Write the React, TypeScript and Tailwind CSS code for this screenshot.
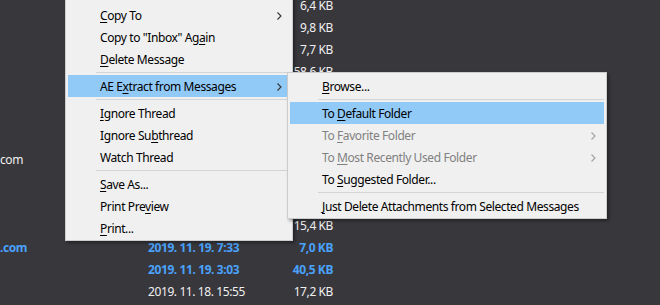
import React from 'react';

type MenuEntry =
  | { kind: 'sep' }
  | { kind: 'item'; text: string; key?: number; arrow?: boolean; disabled?: boolean; active?: boolean };

// label with the access-key letter underlined
const Label: React.FC<{ text: string; at?: number }> = ({ text, at }) => {
  if (at === undefined || at < 0) return <>{text}</>;
  return (
    <>
      {text.slice(0, at)}
      <span className="underline underline-offset-2">{text[at]}</span>
      {text.slice(at + 1)}
    </>
  );
};

const Chevron: React.FC<{ muted?: boolean }> = ({ muted }) => (
  <svg width="5" height="8" viewBox="0 0 5 8" className="shrink-0">
    <path d="M0.5 0.5 L4 4 L0.5 7.5" fill="none" stroke={muted ? '#a0a0a0' : '#333333'} strokeWidth="1.1" />
  </svg>
);

const Menu: React.FC<{ entries: MenuEntry[]; className: string }> = ({ entries, className }) => (
  <div
    className={`absolute border border-[#cccccc] bg-[#f0f0f0] px-[2px] pt-[2px] pb-[1px] shadow-[2px_2px_3px_rgba(0,0,0,0.35)] ${className}`}
  >
    {entries.map((e, i) =>
      e.kind === 'sep' ? (
        <div key={i} className="h-[5px] pt-[2px] pl-[28px]">
          <div className="h-px bg-[#d4d4d4]" />
        </div>
      ) : (
        <div
          key={i}
          className={`flex h-[22px] items-center justify-between pl-[32px] pr-[8px] pt-[2px] whitespace-nowrap ${
            e.active ? 'bg-[#91c9f7]' : ''
          } ${e.disabled ? 'text-[#808080]' : 'text-black'}`}
        >
          <span>
            <Label text={e.text} at={e.key} />
          </span>
          {e.arrow && <Chevron muted={e.disabled} />}
        </div>
      )
    )}
  </div>
);

const mainMenu: MenuEntry[] = [
  { kind: 'item', text: 'Move To', arrow: true },
  { kind: 'item', text: 'Copy To', key: 0, arrow: true },
  { kind: 'item', text: 'Copy to "Inbox" Again', key: 18 },
  { kind: 'item', text: 'Delete Message', key: 0 },
  { kind: 'sep' },
  { kind: 'item', text: 'AE Extract from Messages', key: 4, arrow: true, active: true },
  { kind: 'sep' },
  { kind: 'item', text: 'Ignore Thread', key: 0 },
  { kind: 'item', text: 'Ignore Subthread', key: 9 },
  { kind: 'item', text: 'Watch Thread' },
  { kind: 'sep' },
  { kind: 'item', text: 'Save As...', key: 0 },
  { kind: 'item', text: 'Print Preview', key: 9 },
  { kind: 'item', text: 'Print...', key: 0 },
];

const subMenu: MenuEntry[] = [
  { kind: 'item', text: 'Browse...', key: 0 },
  { kind: 'sep' },
  { kind: 'item', text: 'To Default Folder', key: 3, active: true },
  { kind: 'item', text: 'To Favorite Folder', key: 3, arrow: true, disabled: true },
  { kind: 'item', text: 'To Most Recently Used Folder', key: 3, arrow: true, disabled: true },
  { kind: 'item', text: 'To Suggested Folder...', key: 3 },
  { kind: 'sep' },
  { kind: 'item', text: 'Just Delete Attachments from Selected Messages', key: 0 },
];

type Row = { who?: string; date?: string; size: string; unread?: boolean };

const rows: Row[] = [
  { date: '2019. 11. 21. 9:12', size: '6,4 KB' },
  { date: '2019. 11. 21. 8:40', size: '9,8 KB' },
  { date: '2019. 11. 20. 22:05', size: '7,7 KB' },
  { date: '2019. 11. 20. 18:31', size: '58,6 KB' },
  { date: '2019. 11. 20. 14:02', size: '12,1 KB' },
  { date: '2019. 11. 20. 11:47', size: '8,3 KB' },
  { date: '2019. 11. 20. 10:30', size: '4,6 KB' },
  { who: 'com', date: '2019. 11. 20. 9:15', size: '21,9 KB' },
  { date: '2019. 11. 20. 7:58', size: '5,2 KB' },
  { date: '2019. 11. 19. 23:10', size: '33,0 KB' },
  { date: '2019. 11. 19. 18:26', size: '15,4 KB' },
  { who: '.com', date: '2019. 11. 19. 7:33', size: '7,0 KB', unread: true },
  { date: '2019. 11. 19. 3:03', size: '40,5 KB', unread: true },
  { date: '2019. 11. 18. 15:55', size: '17,2 KB' },
];

const App: React.FC = () => {
  return (
    <div className="relative h-[305px] w-[660px] overflow-hidden bg-[#38373c] font-['Noto_Sans','Open_Sans',sans-serif] text-[12px] leading-none tracking-[-0.4px]">
      {/* message list */}
      <div className="-mt-[6px]">
        {rows.map((r, i) => (
          <div
            key={i}
            className={`grid h-[22px] grid-cols-[148px_110px_75px] items-center pt-[2px] whitespace-nowrap ${
              r.unread ? 'font-bold text-[#4aa2fb]' : 'text-[#f0f0f0]'
            }`}
          >
            <span className="overflow-hidden">{r.who}</span>
            <span>{r.date}</span>
            <span className="text-right">{r.size}</span>
          </div>
        ))}
      </div>

      {/* context menu */}
      <Menu entries={mainMenu} className="left-[65px] top-[-21px] w-[228px]" />
      <Menu entries={subMenu} className="left-[287px] top-[72px] w-[320px]" />
    </div>
  );
};

export default App;
